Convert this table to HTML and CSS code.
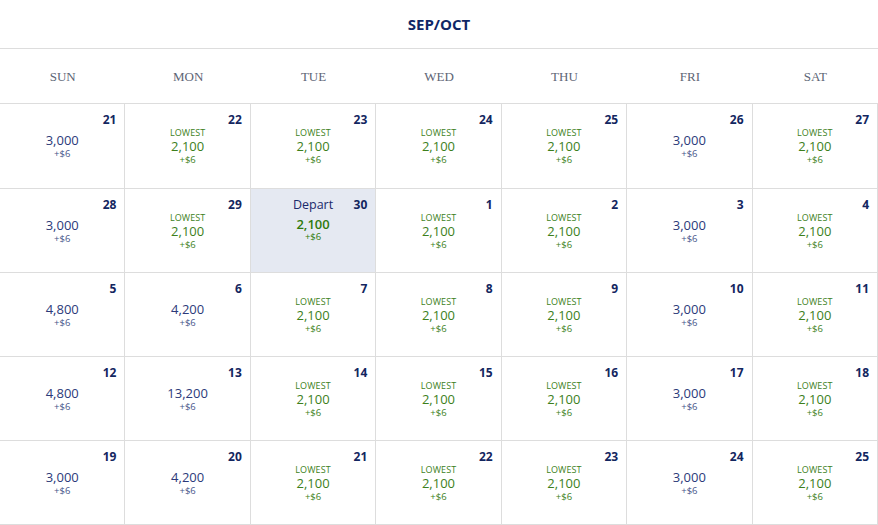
FILE: index.html
```html
<!DOCTYPE html>
<html lang="en">
<head>
<meta charset="utf-8">
<title>SEP/OCT</title>
<link rel="stylesheet" href="styles.css">
</head>
<body>
<div class="calendar">
  <div class="title">SEP/OCT</div>
  <div class="weekdays">
    <div>SUN</div><div>MON</div><div>TUE</div><div>WED</div><div>THU</div><div>FRI</div><div>SAT</div>
  </div>
  <div class="grid">
    <div class="cell plain"><div class="top"><span class="num">21</span></div><div class="price">3,000</div><div class="fee">+$6</div></div>
    <div class="cell low"><div class="top"><span class="num">22</span></div><div class="label">LOWEST</div><div class="price">2,100</div><div class="fee">+$6</div></div>
    <div class="cell low"><div class="top"><span class="num">23</span></div><div class="label">LOWEST</div><div class="price">2,100</div><div class="fee">+$6</div></div>
    <div class="cell low"><div class="top"><span class="num">24</span></div><div class="label">LOWEST</div><div class="price">2,100</div><div class="fee">+$6</div></div>
    <div class="cell low"><div class="top"><span class="num">25</span></div><div class="label">LOWEST</div><div class="price">2,100</div><div class="fee">+$6</div></div>
    <div class="cell plain"><div class="top"><span class="num">26</span></div><div class="price">3,000</div><div class="fee">+$6</div></div>
    <div class="cell low"><div class="top"><span class="num">27</span></div><div class="label">LOWEST</div><div class="price">2,100</div><div class="fee">+$6</div></div>

    <div class="cell plain"><div class="top"><span class="num">28</span></div><div class="price">3,000</div><div class="fee">+$6</div></div>
    <div class="cell low"><div class="top"><span class="num">29</span></div><div class="label">LOWEST</div><div class="price">2,100</div><div class="fee">+$6</div></div>
    <div class="cell depart"><div class="top"><span class="dep">Depart</span><span class="num">30</span></div><div class="price">2,100</div><div class="fee">+$6</div></div>
    <div class="cell low"><div class="top"><span class="num">1</span></div><div class="label">LOWEST</div><div class="price">2,100</div><div class="fee">+$6</div></div>
    <div class="cell low"><div class="top"><span class="num">2</span></div><div class="label">LOWEST</div><div class="price">2,100</div><div class="fee">+$6</div></div>
    <div class="cell plain"><div class="top"><span class="num">3</span></div><div class="price">3,000</div><div class="fee">+$6</div></div>
    <div class="cell low"><div class="top"><span class="num">4</span></div><div class="label">LOWEST</div><div class="price">2,100</div><div class="fee">+$6</div></div>

    <div class="cell plain"><div class="top"><span class="num">5</span></div><div class="price">4,800</div><div class="fee">+$6</div></div>
    <div class="cell plain"><div class="top"><span class="num">6</span></div><div class="price">4,200</div><div class="fee">+$6</div></div>
    <div class="cell low"><div class="top"><span class="num">7</span></div><div class="label">LOWEST</div><div class="price">2,100</div><div class="fee">+$6</div></div>
    <div class="cell low"><div class="top"><span class="num">8</span></div><div class="label">LOWEST</div><div class="price">2,100</div><div class="fee">+$6</div></div>
    <div class="cell low"><div class="top"><span class="num">9</span></div><div class="label">LOWEST</div><div class="price">2,100</div><div class="fee">+$6</div></div>
    <div class="cell plain"><div class="top"><span class="num">10</span></div><div class="price">3,000</div><div class="fee">+$6</div></div>
    <div class="cell low"><div class="top"><span class="num">11</span></div><div class="label">LOWEST</div><div class="price">2,100</div><div class="fee">+$6</div></div>

    <div class="cell plain"><div class="top"><span class="num">12</span></div><div class="price">4,800</div><div class="fee">+$6</div></div>
    <div class="cell plain"><div class="top"><span class="num">13</span></div><div class="price">13,200</div><div class="fee">+$6</div></div>
    <div class="cell low"><div class="top"><span class="num">14</span></div><div class="label">LOWEST</div><div class="price">2,100</div><div class="fee">+$6</div></div>
    <div class="cell low"><div class="top"><span class="num">15</span></div><div class="label">LOWEST</div><div class="price">2,100</div><div class="fee">+$6</div></div>
    <div class="cell low"><div class="top"><span class="num">16</span></div><div class="label">LOWEST</div><div class="price">2,100</div><div class="fee">+$6</div></div>
    <div class="cell plain"><div class="top"><span class="num">17</span></div><div class="price">3,000</div><div class="fee">+$6</div></div>
    <div class="cell low"><div class="top"><span class="num">18</span></div><div class="label">LOWEST</div><div class="price">2,100</div><div class="fee">+$6</div></div>

    <div class="cell plain"><div class="top"><span class="num">19</span></div><div class="price">3,000</div><div class="fee">+$6</div></div>
    <div class="cell plain"><div class="top"><span class="num">20</span></div><div class="price">4,200</div><div class="fee">+$6</div></div>
    <div class="cell low"><div class="top"><span class="num">21</span></div><div class="label">LOWEST</div><div class="price">2,100</div><div class="fee">+$6</div></div>
    <div class="cell low"><div class="top"><span class="num">22</span></div><div class="label">LOWEST</div><div class="price">2,100</div><div class="fee">+$6</div></div>
    <div class="cell low"><div class="top"><span class="num">23</span></div><div class="label">LOWEST</div><div class="price">2,100</div><div class="fee">+$6</div></div>
    <div class="cell plain"><div class="top"><span class="num">24</span></div><div class="price">3,000</div><div class="fee">+$6</div></div>
    <div class="cell low"><div class="top"><span class="num">25</span></div><div class="label">LOWEST</div><div class="price">2,100</div><div class="fee">+$6</div></div>
  </div>
</div>
</body>
</html>
```
FILE: styles.css
```css
* { box-sizing: border-box; }
html, body { margin: 0; padding: 0; background: #fff; }
body { font-family: "Open Sans", "Noto Sans", sans-serif; color: #1b2a6b; }

.calendar { width: 878px; }

.title {
  height: 49px;
  border-bottom: 1px solid #dddddd;
  display: flex;
  align-items: center;
  justify-content: center;
  font-size: 15px;
  font-weight: 700;
  color: #102766;
  padding-bottom: 1px;
}

.weekdays {
  height: 55px;
  border-bottom: 1px solid #dddddd;
  display: grid;
  grid-template-columns: repeat(7, 1fr);
  align-items: center;
  font-family: "Liberation Serif", "Times New Roman", serif;
  font-size: 13px;
  color: #5d6575;
  text-align: center;
  padding-top: 2px;
}

.grid {
  display: grid;
  grid-template-columns: repeat(7, 1fr);
  grid-template-rows: 85px repeat(4, 84px);
}

.cell {
  border-right: 1px solid #dddddd;
  border-bottom: 1px solid #dddddd;
  padding: 8px 8px 0 8px;
  display: flex;
  flex-direction: column;
  align-items: center;
}

.top {
  width: 100%;
  height: 16px;
  display: grid;
  grid-template-columns: 1fr auto 1fr;
  line-height: 16px;
}
.num {
  grid-column: 3;
  justify-self: end;
  font-size: 12px;
  font-weight: 700;
  color: #13265f;
}
.dep {
  grid-column: 2;
  font-size: 12.5px;
  color: #1b2a6b;
}

.label {
  font-size: 9px;
  line-height: 10px;
  color: #3d7f1c;
  letter-spacing: 0.1px;
}
.price {
  font-size: 13px;
  line-height: 16px;
}
.fee {
  font-size: 9.5px;
  line-height: 12px;
}

.plain .price { margin-top: 4px; color: #2c3a7a; }
.plain .fee { color: #47558a; }

.low .price { color: #3d7f1c; }
.low .fee { color: #3d7f1c; }

.depart { background: #e5e9f2; }
.depart .price { margin-top: 3px; color: #2f7a0c; font-weight: 600; }
.depart .fee { color: #2f7a0c; margin-top: -1px; }
```
